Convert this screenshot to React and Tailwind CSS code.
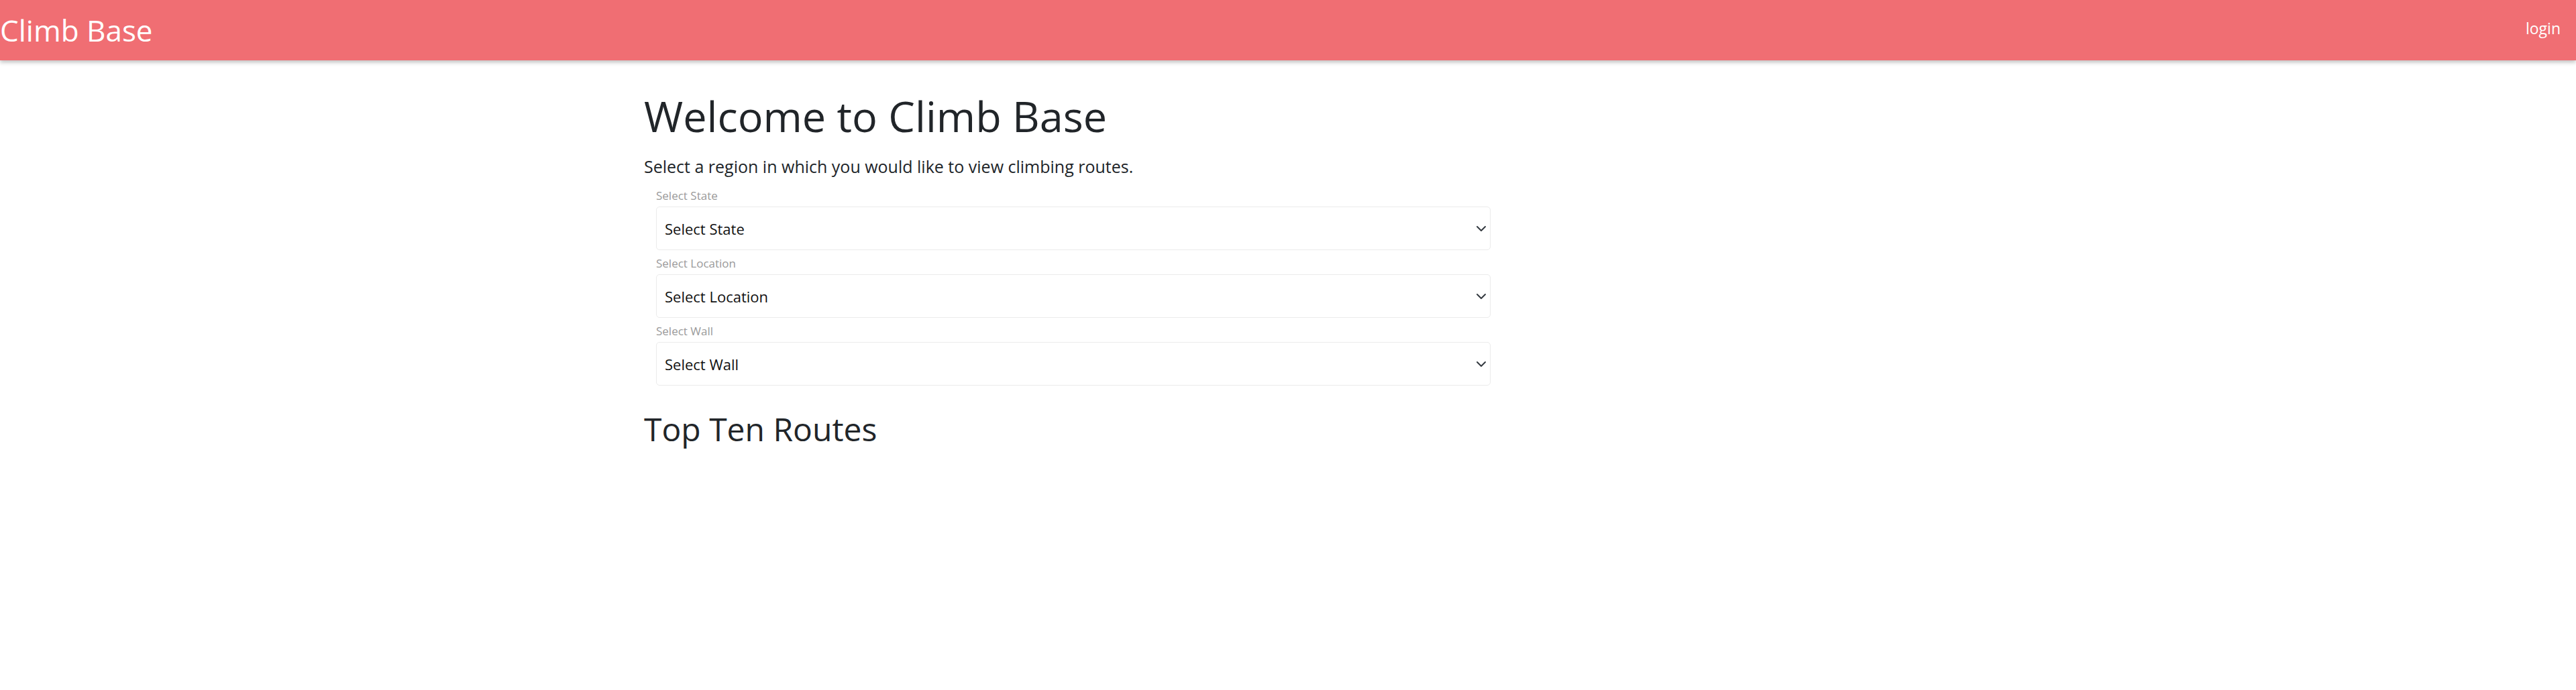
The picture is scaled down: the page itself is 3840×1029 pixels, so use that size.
const regions = [
  { label: "Select State", placeholder: "Select State" },
  { label: "Select Location", placeholder: "Select Location" },
  { label: "Select Wall", placeholder: "Select Wall" },
];

function Chevron() {
  return (
    <svg
      className="pointer-events-none absolute right-[6px] top-1/2 -translate-y-1/2"
      width="16"
      height="16"
      viewBox="0 0 16 16"
      fill="none"
    >
      <path d="m2 5 6 6 6-6" stroke="#343a40" strokeWidth="2" strokeLinecap="round" strokeLinejoin="round" />
    </svg>
  );
}

export default function App() {
  return (
    <div className="min-h-screen bg-white font-['Open_Sans',sans-serif] text-[#212529]">
      {/* navbar */}
      <nav className="relative z-10 flex h-[90px] items-center justify-between bg-[#f06e73] pr-[23px] shadow-[0_3px_6px_rgba(0,0,0,0.25)]">
        <span className="text-[44px] leading-[60px] text-white">Climb Base</span>
        <a href="#" className="pb-[6px] text-[23px] leading-[32px] text-white">
          login
        </a>
      </nav>

      <main className="ml-[960px] w-[1280px] pt-[45px]">
        <h1 className="text-[63px] leading-[76px] font-normal">Welcome to Climb Base</h1>
        <p className="mt-[21px] text-[25px] leading-[32px]">
          Select a region in which you would like to view climbing routes.
        </p>

        <form className="mt-[18px] flex flex-col gap-[10px] px-[18px]">
          {regions.map((r) => (
            <div key={r.label} className="flex flex-col">
              <label className="mb-[6px] text-[17px] leading-[20px] text-[#9a9a9a]">{r.label}</label>
              <div className="relative">
                <select className="h-[65px] w-full appearance-none rounded-[5px] border border-[#ebebeb] bg-white pl-[12px] pr-[30px] text-[22px] leading-[30px] text-[#111]">
                  <option>{r.placeholder}</option>
                </select>
                <Chevron />
              </div>
            </div>
          ))}
        </form>

        <h2 className="mt-[33px] text-[48px] leading-[64px] font-normal">Top Ten Routes</h2>
      </main>
    </div>
  );
}
